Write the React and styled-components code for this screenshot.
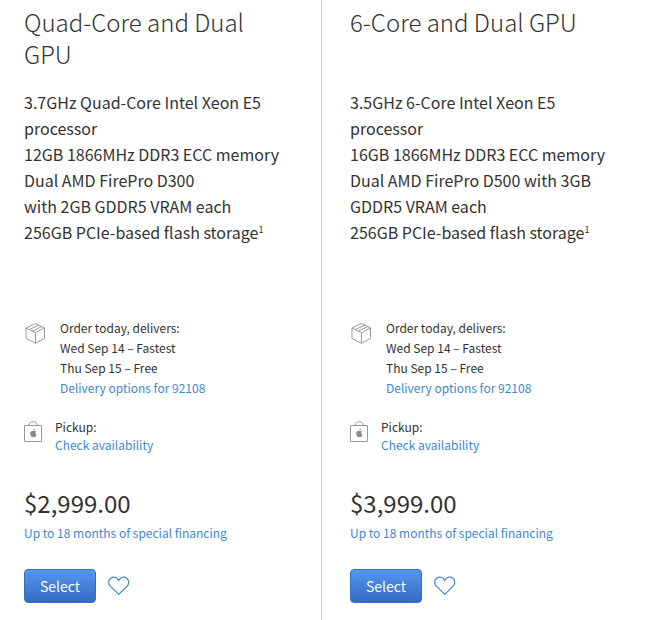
import React from 'react';
import styled, { createGlobalStyle } from 'styled-components';

const GlobalStyle = createGlobalStyle`
  body {
    margin: 0;
    background: #fff;
    color: #333;
    font-family: 'Noto Sans CJK SC', 'Open Sans', sans-serif;
    font-size: 12px;
    line-height: 20px;
  }
  a {
    color: #3f87cf;
    text-decoration: none;
  }
`;

const Models = styled.main`
  display: grid;
  grid-template-columns: 1fr 1fr;
  padding-right: 4px;
`;

const Model = styled.article`
  padding: 6px 24px 17px;
  & + & {
    padding-left: 28px;
  }
  &:first-child {
    border-right: 1px solid #ccc;
  }
`;

const Title = styled.h2`
  min-height: 64px;
  margin: 0 0 19px;
  font-size: 24px;
  font-weight: 300;
  line-height: 32px;
`;

const Specs = styled.ul`
  min-height: 229px;
  margin: 0;
  padding: 0;
  list-style: none;
  font-size: 16px;
  line-height: 26px;
  sup {
    font-size: 9px;
    line-height: 0;
  }
`;

const Info = styled.div`
  display: flex;
  gap: ${({ $gap }) => $gap}px;
  margin-bottom: 20px;
  p {
    margin: 0;
  }
  svg {
    flex: none;
    margin-top: 4px;
  }
`;

const Pickup = styled(Info)`
  margin-bottom: 33px;
  line-height: 18px;
  svg {
    margin-top: 3px;
  }
`;

const Price = styled.p`
  margin: 0 0 4px;
  font-size: 24px;
  line-height: 32px;
`;

const Actions = styled.div`
  display: flex;
  align-items: center;
  gap: 12px;
  margin-top: 26px;
`;

const SelectButton = styled.button`
  height: 34px;
  padding: 0 15px;
  border: 1px solid #3270cc;
  border-radius: 4px;
  background: linear-gradient(#5598ec, #3469c6);
  color: #fff;
  font: inherit;
  font-size: 14px;
  line-height: 30px;
  cursor: pointer;
`;

const FavoriteButton = styled.button`
  display: flex;
  padding: 0;
  border: 0;
  background: none;
  color: #3f87cf;
  cursor: pointer;
`;

const BoxIcon = () => (
  <svg width="22" height="23" viewBox="0 0 22 23" fill="none" stroke="#999" strokeLinejoin="round" aria-hidden="true">
    <path d="M11.5 1.5 20.5 6V16.5L11.5 21.3 2 16.5V6Z" />
    <path d="M2 6 11.5 10.6 20.5 6M11.5 10.6V21.3M5.3 7.6 14.6 3.1M8.4 9.1 17.6 4.6" />
  </svg>
);

const BagIcon = () => (
  <svg width="19" height="22" viewBox="0 0 19 22" fill="none" stroke="#999" aria-hidden="true">
    <path d="M.5 4.5H17.5V20.5H.5ZM5 4.5C5 2 7 .7 9.2 .7S13.4 2 13.4 4.5" />
    <path
      fill="#888"
      stroke="none"
      d="M9.4 10.2C10.4 9.7 11.5 9.8 12.2 10.6 10.9 11.5 11 13.2 12.5 13.9 12 15.2 11.2 16.2 10.5 16.1 9.8 15.8 9.2 15.8 8.6 16.1 7.3 16.4 6.1 13.9 6.2 12.3 6.4 10.3 7.9 9.6 9.4 10.2ZM9.3 9.6C9.3 8.4 10 7.7 11 7.5 11.1 8.6 10.3 9.6 9.3 9.6Z"
    />
  </svg>
);

const HeartIcon = () => (
  <svg width="22" height="20" viewBox="0 0 22 20" fill="none" stroke="currentColor" strokeWidth="1.2" aria-hidden="true">
    <path d="M10.7 18.4 2.3 10.1C.1 7.8 .2 4.4 2.4 2.5 4.9 .4 8.9 .7 10.7 4.4 12.5 .7 16.5 .4 19 2.5 21.2 4.4 21.3 7.8 19.1 10.1Z" />
  </svg>
);

const models = [
  {
    title: 'Quad-Core and Dual GPU',
    specs: [
      '3.7GHz Quad-Core Intel Xeon E5 processor',
      '12GB 1866MHz DDR3 ECC memory',
      'Dual AMD FirePro D300',
      'with 2GB GDDR5 VRAM each',
    ],
    price: '$2,999.00',
  },
  {
    title: '6-Core and Dual GPU',
    specs: [
      '3.5GHz 6-Core Intel Xeon E5 processor',
      '16GB 1866MHz DDR3 ECC memory',
      'Dual AMD FirePro D500 with 3GB GDDR5 VRAM each',
    ],
    price: '$3,999.00',
  },
];

const App = () => (
  <>
    <GlobalStyle />
    <Models>
      {models.map(({ title, specs, price }) => (
        <Model key={title}>
          <Title>{title}</Title>
          <Specs>
            {specs.map((spec) => (
              <li key={spec}>{spec}</li>
            ))}
            <li>
              256GB PCIe-based flash storage<sup>1</sup>
            </li>
          </Specs>
          <Info $gap={14}>
            <BoxIcon />
            <div>
              <p>Order today, delivers:</p>
              <p>Wed Sep 14 – Fastest</p>
              <p>Thu Sep 15 – Free</p>
              <a href="#delivery">Delivery options for 92108</a>
            </div>
          </Info>
          <Pickup $gap={12}>
            <BagIcon />
            <div>
              <p>Pickup:</p>
              <a href="#pickup">Check availability</a>
            </div>
          </Pickup>
          <Price>{price}</Price>
          <a href="#financing">Up to 18 months of special financing</a>
          <Actions>
            <SelectButton type="button">Select</SelectButton>
            <FavoriteButton type="button" aria-label="Add to favorites">
              <HeartIcon />
            </FavoriteButton>
          </Actions>
        </Model>
      ))}
    </Models>
  </>
);

export default App;
